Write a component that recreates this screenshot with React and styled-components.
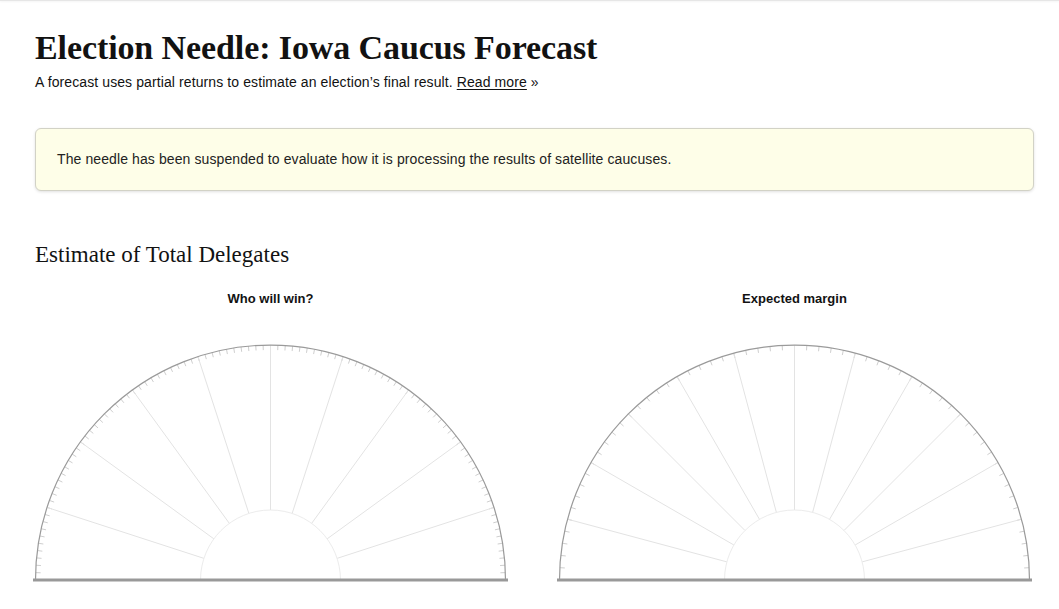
import styled, { createGlobalStyle } from 'styled-components'

const GlobalStyle = createGlobalStyle`
  html, body {
    margin: 0;
    padding: 0;
    background: #fff;
  }
  body {
    font-family: 'Liberation Sans', Arial, sans-serif;
    color: #121212;
  }
`

const TopRule = styled.div`
  height: 1px;
  background: #e6e6e6;
  box-shadow: 0 1px 2px rgba(0, 0, 0, 0.06);
`

const Page = styled.main`
  padding: 0 25px 0 35px;
`

const Title = styled.h1`
  margin: 27px 0 0;
  font-family: 'Liberation Serif', 'Times New Roman', serif;
  font-weight: 700;
  font-size: 34px;
  line-height: 39px;
  letter-spacing: -0.1px;
  color: #121212;
`

const Dek = styled.p`
  margin: 5px 0 0;
  font-size: 14px;
  line-height: 20px;
  letter-spacing: 0.1px;
  color: #121212;

  a {
    color: #121212;
    text-decoration: underline;
    text-underline-offset: 2px;
  }
`

const Notice = styled.div`
  margin-top: 36px;
  padding: 20px 21px 21px;
  background: #fefee8;
  border: 1px solid #d2d2c6;
  border-radius: 6px;
  box-shadow: 0 1px 3px rgba(0, 0, 0, 0.12);
  font-size: 14px;
  line-height: 20px;
  letter-spacing: 0.1px;
  color: #222;
`

const SectionTitle = styled.h2`
  margin: 50px 0 0;
  font-family: 'Liberation Serif', 'Times New Roman', serif;
  font-weight: 400;
  font-size: 23px;
  line-height: 28px;
  color: #121212;
`

const GaugeRow = styled.div`
  display: grid;
  grid-template-columns: 475px 475px;
  column-gap: 49px;
  margin: 22px 0 0 -2px;
`

const GaugeCol = styled.div`
  display: flex;
  flex-direction: column;
  align-items: center;
`

const GaugeLabel = styled.div`
  font-weight: 700;
  font-size: 13px;
  line-height: 16px;
  color: #121212;
`

const Dial = styled.svg`
  display: block;
  margin-top: 36px;
  width: 475px;
  height: 242px;
`

const CX = 237.5
const CY = 237
const R = 235
const RI = 70

function pt(angle, radius) {
  const a = (angle * Math.PI) / 180
  return [CX - Math.cos(a) * radius, CY - Math.sin(a) * radius]
}

function Gauge({ sectors, tickStep }) {
  const spokes = []
  for (let k = 1; k < sectors; k++) spokes.push((k * 180) / sectors)
  const ticks = []
  for (let a = tickStep; a < 180; a += tickStep) ticks.push(a)

  return (
    <Dial viewBox='0 0 475 242'>
      {ticks.map((a) => {
        const [x1, y1] = pt(a, R)
        const [x2, y2] = pt(a, R - 5)
        return <line key={'t' + a} x1={x1} y1={y1} x2={x2} y2={y2} stroke='#cfcfcf' strokeWidth='1' />
      })}
      {spokes.map((a) => {
        const [x1, y1] = pt(a, RI)
        const [x2, y2] = pt(a, R)
        return <line key={'s' + a} x1={x1} y1={y1} x2={x2} y2={y2} stroke='#e3e3e3' strokeWidth='1' />
      })}
      <path
        d={`M ${CX - RI} ${CY} A ${RI} ${RI} 0 0 1 ${CX + RI} ${CY}`}
        fill='none'
        stroke='#ececec'
        strokeWidth='1'
      />
      <path
        d={`M ${CX - R} ${CY} A ${R} ${R} 0 0 1 ${CX + R} ${CY}`}
        fill='none'
        stroke='#9a9a9a'
        strokeWidth='1.2'
      />
      <line x1='0' y1={CY} x2='475' y2={CY} stroke='#999' strokeWidth='3' />
    </Dial>
  )
}

export default function App() {
  return (
    <>
      <GlobalStyle />
      <TopRule />
      <Page>
        <Title>Election Needle: Iowa Caucus Forecast</Title>
        <Dek>
          A forecast uses partial returns to estimate an election’s final result.{' '}
          <a href='#'>Read more</a> »
        </Dek>
        <Notice>
          The needle has been suspended to evaluate how it is processing the results of satellite
          caucuses.
        </Notice>
        <SectionTitle>Estimate of Total Delegates</SectionTitle>
        <GaugeRow>
          <GaugeCol>
            <GaugeLabel>Who will win?</GaugeLabel>
            <Gauge sectors={10} tickStep={1.8} />
          </GaugeCol>
          <GaugeCol>
            <GaugeLabel>Expected margin</GaugeLabel>
            <Gauge sectors={12} tickStep={3} />
          </GaugeCol>
        </GaugeRow>
      </Page>
    </>
  )
}
